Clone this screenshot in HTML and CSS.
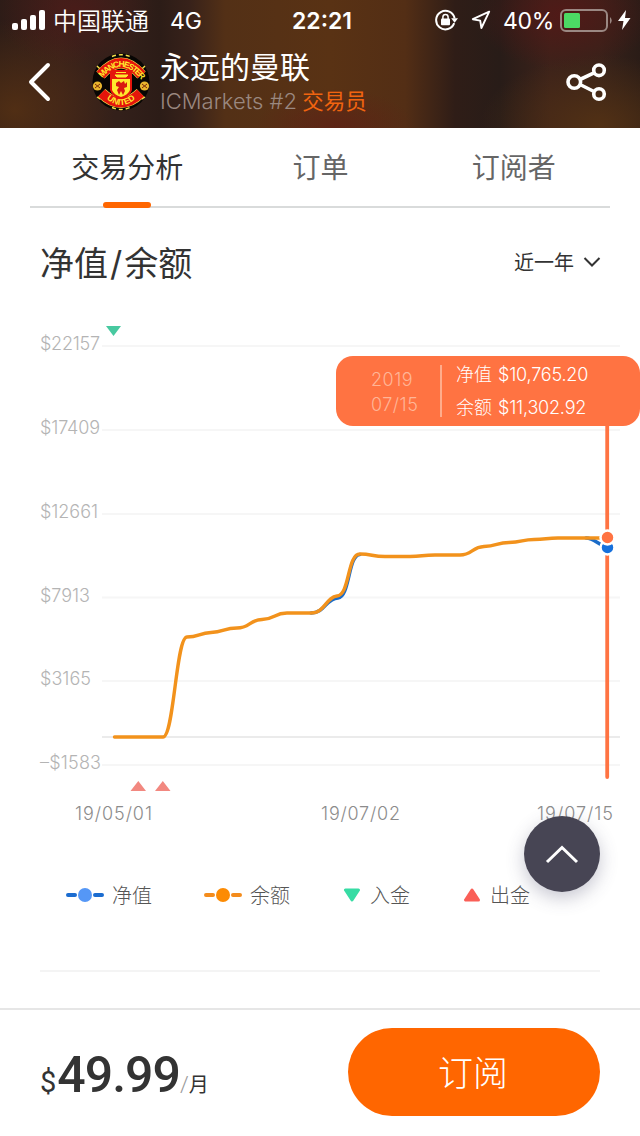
FILE: index.html
```
<!DOCTYPE html>
<html lang="zh-CN">
<head>
    <meta charset="UTF-8">
    <meta name="viewport" content="width=device-width, initial-scale=1.0">
    <title>永远的曼联</title>
    <link rel="stylesheet" href="styles.css">
</head>
<body>

<header>
    <!-- Status bar -->
    <div class="status">
        <div class="status-left">
            <svg width="34" height="20" viewBox="0 0 34 20" fill="#fff">
                <rect x="0" y="13" width="6" height="7" rx="2"/>
                <rect x="9" y="9" width="6" height="11" rx="2"/>
                <rect x="18" y="5" width="6" height="15" rx="2"/>
                <rect x="27" y="0" width="6" height="20" rx="2"/>
            </svg>
            <span class="carrier">中国联通</span>
            <span class="network">4G</span>
        </div>
        <div class="clock">22:21</div>
        <div class="status-right">
            <svg class="lock" width="23" height="22" viewBox="0 0 23 22">
                <path d="M19.2 14.2A9.3 9.3 0 1 1 19.6 9.4" fill="none" stroke="#fff" stroke-width="2"/>
                <path d="M16.2 9.2h6.8l-3.4 4.6z" fill="#fff"/>
                <rect x="6" y="9.6" width="9" height="6.6" rx="1" fill="#fff"/>
                <path d="M7.9 10V8a2.6 2.6 0 0 1 5.200 0v2" fill="none" stroke="#fff" stroke-width="1.5"/>
            </svg>
            <svg class="arrow" width="20" height="20" viewBox="0 0 20 20">
                <path d="M18.2 1.6L1.8 9.2l7.400 1.400 1.200 7.400z" fill="none" stroke="#fff" stroke-width="1.9" stroke-linejoin="round"/>
            </svg>
            <span class="percent">40%</span>
            <svg class="battery" width="54" height="24" viewBox="0 0 54 24">
                <rect x="1" y="1" width="46" height="21" rx="5" fill="none" stroke="#9b8883" stroke-width="2"/>
                <rect x="4" y="4" width="16" height="15" rx="1.5" fill="#4cd964"/>
                <path d="M50 8q3.500 3.500 0 7z" fill="#9b8883"/>
            </svg>
            <svg width="13" height="20" viewBox="0 0 13 20"><path d="M8 0L0 11h5.500L4 20l8.500-12H7z" fill="#fff"/></svg>
        </div>
    </div>

    <!-- Trader info -->
    <div class="nav">
        <svg class="back" width="24" height="40" viewBox="0 0 24 40"><path d="M20 3L3 20l17 17" fill="none" stroke="#fff" stroke-width="4" stroke-linecap="round" stroke-linejoin="round"/></svg>
        <svg class="avatar" width="58" height="58" viewBox="0 0 58 58">
            <defs>
                <path id="topArc" d="M9.500 26Q29 1.500 48.500 26"/>
                <path id="bottomArc" d="M11 42.500Q29 61.500 47 42.500"/>
            </defs>
            <circle cx="29" cy="29" r="28.5" fill="#080604"/>
            <g fill="none" stroke="#f4e04a" stroke-width="1.4" stroke-dasharray="4 3">
                <path d="M20 3.500Q29 0 38 3.500"/>
                <path d="M20 54.500Q29 58.500 38 54.500"/>
                <path d="M5 13l4 4M53 13l-4 4M5 44l5 3M53 44l-5 3"/>
            </g>
            <path d="M8.500 22Q29 -2 49.500 22" fill="none" stroke="#f4e04a" stroke-width="11"/>
            <path d="M8.500 22Q29 -2 49.500 22" fill="none" stroke="#e5150b" stroke-width="10"/>
            <path d="M9.500 40Q29 59 48.500 40" fill="none" stroke="#f4e04a" stroke-width="11"/>
            <path d="M9.500 40Q29 59 48.500 40" fill="none" stroke="#e5150b" stroke-width="10"/>
            <path d="M18 17h22v20q-2 7-11 9-9-2-11-9z" fill="#e5150b"/>
            <path d="M20 26h18v11q-2 5-9 7-7-2-9-7z" fill="#ffe92e"/>
            <path d="M23 22h13l-2 2H25zM24 19.500h10" fill="#ffe92e" stroke="#ffe92e"/>
            <path d="M24 30l3-2 2 2 3-2 1 3 2-2v5l-3 1 1 3-2 4-2-4-2 4-2-5 2-3-3-1z" fill="#d91a10"/>
            <circle cx="5.500" cy="33" r="4.600" fill="#e8b52e"/>
            <circle cx="52.500" cy="33" r="4.600" fill="#e8b52e"/>
            <path d="M3 31l5 4M8 31l-5 4M50 31l5 4M55 31l-5 4" stroke="#7a2a08"/>
            <text class="crest-text"><textPath href="#topArc" textLength="48" startOffset="1">MANCHESTER</textPath></text>
            <text class="crest-text"><textPath href="#bottomArc" textLength="32" startOffset="5">UNITED</textPath></text>
        </svg>
        <div class="trader">
            <h1>永远的曼联</h1>
            <p><span class="broker">ICMarkets #2</span> <span class="role">交易员</span></p>
        </div>
        <svg class="share" width="42" height="40" viewBox="0 0 42 40" fill="none" stroke="#fff" stroke-width="3.6">
            <circle cx="8.300" cy="20" r="6.300"/>
            <circle cx="33" cy="8.300" r="5.300"/>
            <circle cx="33" cy="32" r="5.300"/>
            <path d="M14 17.500l14-6.600M14 22.500l14 7"/>
        </svg>
    </div>
</header>

<nav class="tabs">
    <a class="tab active">交易分析</a>
    <a class="tab">订单</a>
    <a class="tab">订阅者</a>
</nav>

<main>
    <div class="title-row">
        <h2>净值<span>/</span>余额</h2>
        <div class="period">近一年
            <svg width="18" height="12" viewBox="0 0 18 12"><path d="M1.500 2L9 9.500 16.500 2" fill="none" stroke="#333" stroke-width="2"/></svg>
        </div>
    </div>

    <div class="chart">
        <svg width="640" height="550" viewBox="0 300 640 550">
            <g stroke="#f6f6f6" stroke-width="2">
                <path d="M102 346H620M102 430H620M102 514H620M102 597.500H620M102 681H620M102 765H620"/>
                <path d="M102 737H620" stroke="#ebebeb"/>
            </g>
            <g class="y-label">
                <text x="40" y="350" textLength="60">$22157</text>
                <text x="40" y="434" textLength="60">$17409</text>
                <text x="40" y="518" textLength="58">$12661</text>
                <text x="40" y="602" textLength="50">$7913</text>
                <text x="40" y="685" textLength="51">$3165</text>
                <text x="40" y="769" textLength="61">–$1583</text>
            </g>
            <g class="x-label">
                <text x="75" y="820" textLength="77">19/05/01</text>
                <text x="321" y="820" textLength="79">19/07/02</text>
                <text x="537" y="820" textLength="76">19/07/15</text>
            </g>
            <path d="M106 326h15l-7.500 10z" fill="#48c9a0"/>
            <path d="M130.500 791h15.500l-7.700-10zM155 791h15.500l-7.700-10z" fill="#f28880"/>

            <path class="line equity" d="M311 613C325 613 326 598.500 338 598C350 597 348 554.500 360 554.500"/>
            <path class="line equity" d="M586 538C594 538 597 544 607 547.500"/>
            <path class="line balance" d="M114.500 737H163C174 737 176 637 187 637C199 637 199 633 211 632.500C224 632 224 628 237 628C250 628 249 620 262 619.500C275 619 274 613 287 613H311C325 613 326 597 337 596C350 595 347 554 360 554C372 554 372 556.500 385 556.500H410C422 556.500 422 555 435 555H460C472 555 472 547 484 546.500C497 546 497 542.500 509 542.500C522 542.500 522 539.500 534 539.500C546 539.500 546 538 558 538H604"/>

            <path d="M607.200 425V777" stroke="#ff7342" stroke-width="3.800" stroke-linecap="round"/>
            <circle cx="607.500" cy="547.500" r="7" fill="#1670dc" stroke="#fff" stroke-width="2.500"/>
            <circle cx="607.500" cy="537.500" r="7" fill="#ff7342" stroke="#fff" stroke-width="2.500"/>
        </svg>
        <div class="tooltip">
            <div class="tooltip-date">2019<br>07/15</div>
            <div class="tooltip-values">
                <div>净值 <span>$10,765.20</span></div>
                <div>余额 <span>$11,302.92</span></div>
            </div>
        </div>
    </div>

    <div class="legend">
        <div class="legend-item">
            <svg width="38" height="16" viewBox="0 0 38 16"><path d="M2 8h7M29 8h7" stroke="#1b6cd0" stroke-width="4" stroke-linecap="round"/><circle cx="19" cy="8" r="7" fill="#5597f6"/></svg>
            <span>净值</span>
        </div>
        <div class="legend-item">
            <svg width="38" height="16" viewBox="0 0 38 16"><path d="M2 8h7M29 8h7" stroke="#f48c1c" stroke-width="4" stroke-linecap="round"/><circle cx="19" cy="8" r="7" fill="#fc8b04"/></svg>
            <span>余额</span>
        </div>
        <div class="legend-item">
            <svg width="18" height="14" viewBox="0 0 18 14"><path d="M3.500 2h13L10 12z" fill="#37dca4" stroke="#37dca4" stroke-width="3" stroke-linejoin="round"/></svg>
            <span>入金</span>
        </div>
        <div class="legend-item">
            <svg width="18" height="14" viewBox="0 0 18 14"><path d="M3.500 12h13L10 2z" fill="#fa5f57" stroke="#fa5f57" stroke-width="3" stroke-linejoin="round"/></svg>
            <span>出金</span>
        </div>
    </div>
    <hr>
</main>

<footer>
    <div class="price"><span class="currency">$</span><span class="amount">49.99</span><span class="slash">/</span><span class="unit">月</span></div>
    <button type="button" class="btn">订阅</button>
</footer>

<button type="button" class="to-top" aria-label="top">
    <svg width="34" height="20" viewBox="0 0 34 20"><path d="M2 18L17 3.500 32 18" fill="none" stroke="#fff" stroke-width="3"/></svg>
</button>

</body>
</html>
```
FILE: styles.css
```
/* Styles */
* {
    box-sizing: border-box;
}

body {
    font-family: Inter, "Noto Sans CJK SC", sans-serif;
    margin: 0;
    height: 1136px;
    display: flex;
    flex-direction: column;
    background-color: #fff;
    color: #333;
    overflow: hidden;
}

svg {
    display: block;
    flex-shrink: 0;
}

h1, h2, p {
    margin: 0;
}

/* Header */
header {
    height: 128px;
    color: #fff;
    background:
        radial-gradient(ellipse 80px 55px at 75px 10px, rgba(90, 24, 24, 0.5), transparent),
        radial-gradient(ellipse 90px 55px at 565px 15px, rgba(90, 22, 22, 0.7), transparent),
        radial-gradient(ellipse 80px 40px at 335px 128px, rgba(95, 30, 22, 0.7), transparent),
        radial-gradient(ellipse 100px 90px at 15px 110px, rgba(84, 48, 20, 0.9), transparent),
        radial-gradient(ellipse 120px 70px at 600px 125px, rgba(84, 50, 20, 0.9), transparent),
        linear-gradient(90deg, #2c1c17 0, #38201a 60px, #33201a 120px, #2c1c17 160px, #38221a 190px, #533016 225px, #593214 330px, #532e15 405px, #2f1d17 455px, #281c18 500px, #3c221a 550px, #38221a 600px, #2a1c17 640px);
}

.status {
    height: 40px;
    padding: 0 9px 0 12px;
    display: grid;
    grid-template-columns: 1fr auto 1fr;
    align-items: center;
}

.status-left, .status-right {
    display: flex;
    align-items: center;
}

.status-right {
    justify-content: flex-end;
}

.carrier {
    font-size: 24px;
    font-weight: 350;
    margin-left: 7px;
    padding-bottom: 2px;
}

.network {
    font-size: 23px;
    margin-left: 21px;
    padding-top: 1px;
}

.clock {
    font-size: 23px;
    font-weight: 600;
    padding: 1px 0 0 1px;
}

.lock {
    margin-right: 13px;
}

.percent {
    font-size: 23px;
    margin: 1px 6px 0 12px;
    letter-spacing: -0.3px;
}

.battery {
    margin: 2px 4px 0 0;
}

.nav {
    height: 88px;
    padding: 0 32px 0 28px;
    display: flex;
    align-items: center;
}

.back {
    margin-bottom: 4px;
}

.avatar {
    margin: 0 10px 5px 40px;
}

.crest-text {
    font-family: "Liberation Sans", sans-serif;
    font-size: 8.5px;
    font-weight: bold;
    fill: #ffe92e;
}

.trader {
    flex: 1;
    padding-bottom: 3px;
}

h1 {
    font-size: 30px;
    font-weight: 400;
    line-height: 38px;
}

.trader p {
    font-size: 22px;
    line-height: 31px;
    white-space: nowrap;
}

.broker {
    color: #9a8880;
    font-weight: 300;
}

.role {
    margin-left: -1px;
    font-size: 21.5px;
    color: #f06410;
}

.share {
    margin-bottom: 4px;
}

/* Tabs */
.tabs {
    height: 80px;
    margin: 0 30px;
    display: grid;
    grid-template-columns: repeat(3, 1fr);
    border-bottom: 2px solid #d9dbdb;
}

.tab {
    position: relative;
    padding-left: 1px;
    text-align: center;
    font-size: 28px;
    line-height: 80px;
    height: 78px;
    color: #666;
}

.tab.active {
    color: #333;
}

.tab.active::after {
    content: "";
    position: absolute;
    left: 50%;
    bottom: -2px;
    width: 48px;
    height: 6px;
    margin-left: -24px;
    border-radius: 3px;
    background-color: #ff6600;
}

/* Chart */
main {
    flex: 1;
}

.title-row {
    height: 92px;
    padding: 0 39px 0 40px;
    display: flex;
    align-items: center;
    justify-content: space-between;
}

h2 {
    font-size: 34px;
    font-weight: 400;
    margin-top: 15px;
}

h2 span {
    margin: 0 2px;
}

.period {
    display: flex;
    align-items: center;
    gap: 9px;
    margin-top: 15px;
    font-size: 20px;
}

.chart {
    position: relative;
    height: 550px;
}

.y-label, .x-label {
    font-size: 18px;
    fill: #b4b4b4;
    font-weight: 300;
}

.x-label {
    fill: #8c8c8c;
}

.line {
    fill: none;
    stroke-width: 3.4;
    stroke-linecap: round;
}

.equity {
    stroke: #1b6cc8;
}

.balance {
    stroke: #f2921c;
}

.tooltip {
    position: absolute;
    left: 336px;
    top: 56px;
    width: 304px;
    height: 70px;
    padding-left: 35px;
    display: flex;
    align-items: center;
    border-radius: 17px;
    background-color: #ff7342;
    color: #fff;
    font-size: 18px;
    font-weight: 300;
}

.tooltip-date {
    width: 71px;
    line-height: 25px;
    padding-top: 2px;
    color: #ffb597;
    letter-spacing: 0.5px;
    border-right: 2px solid #ffac8c;
}

.tooltip-values {
    padding-left: 14px;
    line-height: 33px;
    white-space: nowrap;
}

.tooltip-values span {
    margin-left: 1px;
    font-weight: 350;
    letter-spacing: -0.2px;
}

/* Legend */
.legend {
    height: 90px;
    padding-left: 66px;
    display: flex;
    align-items: center;
    gap: 52px;
    font-size: 20px;
    font-weight: 300;
    color: #555;
}

.legend-item {
    display: flex;
    align-items: center;
    gap: 8px;
}

.legend-item:nth-child(3), .legend-item:nth-child(4) {
    gap: 10px;
}

.legend span {
    margin-top: -1px;
}

hr {
    margin: 30px 40px 0;
    border: none;
    border-top: 2px solid #f4f4f4;
}

/* Footer */
footer {
    height: 128px;
    padding: 0 40px 2px;
    display: flex;
    align-items: center;
    justify-content: space-between;
    border-top: 2px solid #e6e6e6;
}

.price {
    display: flex;
    align-items: baseline;
    margin-top: 5px;
    font-family: Roboto, "Noto Sans CJK SC", sans-serif;
}

.currency {
    margin-right: 1px;
    font-size: 29px;
}

.amount {
    font-size: 50px;
    font-weight: 500;
    letter-spacing: -1px;
}

.slash {
    font-size: 22px;
    font-weight: 300;
    color: #999;
}

.unit {
    font-size: 20px;
}

.btn {
    width: 252px;
    height: 88px;
    padding: 0 2px 4px 0;
    border: none;
    border-radius: 44px;
    background-color: #ff6600;
    color: #fff;
    font-family: inherit;
    font-size: 35px;
    font-weight: 300;
    cursor: pointer;
}

.to-top {
    position: absolute;
    left: 524px;
    top: 816px;
    width: 76px;
    height: 76px;
    padding: 0;
    display: flex;
    align-items: center;
    justify-content: center;
    border: none;
    border-radius: 50%;
    background-color: #474554;
    box-shadow: 0 6px 18px rgba(71, 69, 104, 0.3);
}
```
